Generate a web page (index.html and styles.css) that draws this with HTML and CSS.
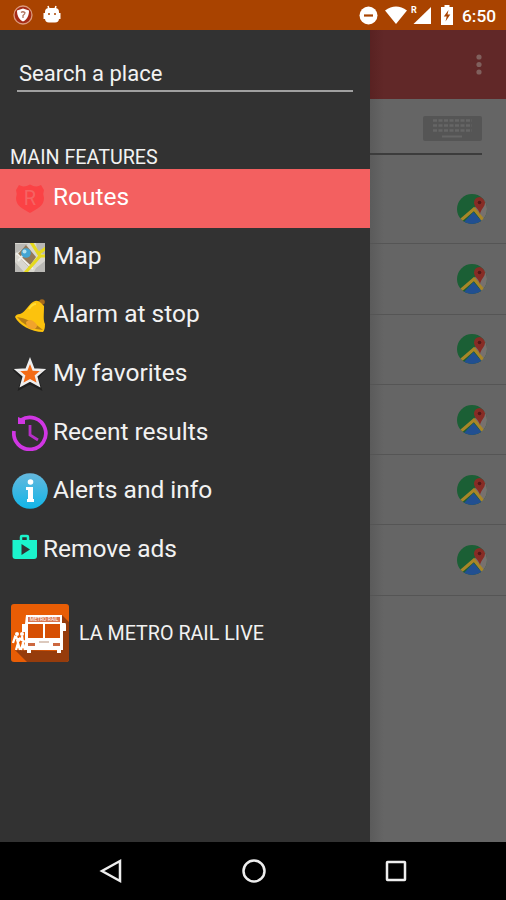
FILE: index.html
```
<!DOCTYPE html>
<html lang="en">

<head>
    <meta charset="utf-8">
    <title>LA Metro Rail Live</title>
    <link rel="stylesheet" href="styles.css">
</head>

<body>
    <svg width="0" height="0" class="defs">
        <symbol id="gmaps" viewBox="0 0 30 30">
            <clipPath id="round"><circle cx="15" cy="15" r="15"/></clipPath>
            <g clip-path="url(#round)">
                <rect width="30" height="30" fill="#1b5f35"/>
                <path d="M17 15 22 8 30 5V30H26Z" fill="#77716f"/>
                <path d="M5 30 16.500 18 27 30Z" fill="#214f91"/>
                <path d="M3 27 17 15 27 27" fill="none" stroke="#a88627" stroke-width="3"/>
                <path d="M23 20C22 15 17 13 17 8.500A5.500 5.500 0 0 1 28 8.500C28 13 24 15 23 20Z" fill="#872c25"/>
                <circle cx="22.500" cy="8.500" r="1.800" fill="#501818"/>
            </g>
        </symbol>
    </svg>

    <div class="status-bar">
        <svg class="shield" width="20" height="20" viewBox="0 0 20 20">
            <circle cx="10" cy="10" r="9" fill="#a62b16" stroke="#dc9a7c" stroke-width="1.300"/>
            <path d="M10 3.500 16 5.500C16 11 14 14.500 10 16.500C6 14.500 4 11 4 5.500Z" fill="#fff"/>
            <path d="M8 7.500Q10 5.800 12 7.800Q12 9 10 10.500V13" fill="none" stroke="#b17762" stroke-width="1.300"/>
        </svg>
        <svg class="droid" width="18" height="19" viewBox="0 0 18 19">
            <path d="M5 1 6 4M13 1 12 4" stroke="#fff" stroke-width="1.500"/>
            <rect x="2" y="3" width="14" height="14.500" rx="4" fill="#fff"/>
            <path d="M1.500 8V14M16.500 8V14" stroke="#fff" stroke-width="2"/>
            <circle cx="6" cy="9" r="1" fill="#a94300"/>
            <circle cx="12" cy="9" r="1" fill="#a94300"/>
        </svg>
        <div class="status-right">
            <svg width="19" height="19" viewBox="0 0 19 19">
                <circle cx="9.500" cy="9.500" r="9" fill="#fff"/>
                <path d="M5 9.500H14" stroke="#a94300" stroke-width="2.200"/>
            </svg>
            <svg class="wifi" width="22" height="18" viewBox="0 0 22 18">
                <path d="M0 4.500Q11-3.500 22 4.500L11 18Z" fill="#fff"/>
            </svg>
            <svg class="signal" width="21" height="20" viewBox="0 0 21 20">
                <path d="M20 2V19H2.500Z" fill="#fff"/>
                <text x="0" y="7.500">R</text>
            </svg>
            <svg class="battery" width="12" height="20" viewBox="0 0 12 20">
                <path d="M3.500 0H8.500V2H12V20H0V2H3.500Z" fill="#fff"/>
                <path d="M7.500 5 2.800 11.500H5.700L4.500 16.500 9.300 9.500H6.500Z" fill="#a94300"/>
            </svg>
            <span class="clock">6:50</span>
        </div>
    </div>

    <div class="screen">
        <div class="drawer">
            <div class="search">Search a place</div>
            <h2>MAIN FEATURES</h2>
            <ul class="menu">
                <li class="active">
                    <svg width="36" height="36" viewBox="0 0 36 36">
                        <path d="M7 5Q12 8 18 4.500Q24 8 29 5L32 10Q30.500 14 32 18C32 26 25 29 18 33C11 29 4 26 4 18Q5.500 14 4 10Z" fill="#fb4245"/>
                        <text class="route-letter" x="18" y="25">R</text>
                    </svg>
                    <span>Routes</span>
                </li>
                <li>
                    <svg width="36" height="36" viewBox="0 0 36 36">
                        <clipPath id="tile"><rect x="3" y="4" width="30" height="29"/></clipPath>
                        <g clip-path="url(#tile)">
                            <rect x="3" y="4" width="30" height="29" fill="#d8d6cf"/>
                            <path d="M3 5H16L9 11 3 15ZM24 4H33V16L25 12ZM3 23 12 33H3ZM24 29 33 22V33H22Z" fill="#b9b8b4"/>
                            <path d="M5 16 14 6 24 18 17 28Z" fill="#92795a"/>
                            <path d="M4 14 21 30M6 22 12 15" stroke="#eeede8" stroke-width="2"/>
                            <path d="M19 3 28 17 13 34M27 17H34M26 15 34 9" fill="none" stroke="#e5d91d" stroke-width="3.200"/>
                            <circle cx="14" cy="14" r="4.800" fill="#43a5d3"/>
                            <circle cx="12.500" cy="12.500" r="2" fill="#b6e1ee"/>
                        </g>
                    </svg>
                    <span>Map</span>
                </li>
                <li>
                    <svg width="36" height="36" viewBox="0 0 36 36">
                        <circle cx="30" cy="5" r="2.800" fill="#a76a1b"/>
                        <path d="M29 6 32 9C32 18 31 23 33 27Q33 33 31 35C19 35 7 28 3 20Q4 17 8 17C14 15 17 6 23 4Q26 3 29 6Z" fill="#fcc20d"/>
                        <path d="M5 20Q17 21 31 33Q14 32 5 20Z" fill="#b97f15"/>
                        <path d="M14 25Q19 20 25 28Q25 33 19 32Q14 31 14 25Z" fill="#f1a32c"/>
                        <path d="M17 12Q20 7 24 7" fill="none" stroke="#ffdc35" stroke-width="2"/>
                    </svg>
                    <span>Alarm at stop</span>
                </li>
                <li>
                    <svg width="36" height="36" viewBox="0 0 36 36">
                        <path d="M18 6 22 15 31 15 25 22 28 32 18 27 8 32 11 22 4 15 14 15Z" fill="#171717" stroke="#202020" stroke-width="3"/>
                        <path d="M18 4.500 21.500 13.500 31 14 24 20 26.500 29 18 24.500 9.500 29 12 20 5 14 14.500 13.500Z" fill="#f36b16" stroke="#eee" stroke-width="2.500"/>
                    </svg>
                    <span>My favorites</span>
                </li>
                <li>
                    <svg width="36" height="36" viewBox="0 0 36 36">
                        <path d="M2 16A16 16 0 1 0 9 5" fill="none" stroke="#d136e4" stroke-width="3.700"/>
                        <path d="M6 2V9H13V5Z" fill="#d136e4"/>
                        <path d="M18 10V20L26 25" fill="none" stroke="#b52fc6" stroke-width="2.800"/>
                    </svg>
                    <span>Recent results</span>
                </li>
                <li>
                    <svg width="36" height="36" viewBox="0 0 36 36">
                        <linearGradient id="blue" x2="0" y2="1">
                            <stop stop-color="#65b8dd"/>
                            <stop offset="1" stop-color="#12b6e8"/>
                        </linearGradient>
                        <circle cx="18" cy="18" r="17.800" fill="url(#blue)"/>
                        <circle cx="18.500" cy="9" r="2.800" fill="#fff"/>
                        <path d="M14 14H21V26H22V29H15V26H16V17H14Z" fill="#fff"/>
                    </svg>
                    <span>Alerts and info</span>
                </li>
                <li class="ads">
                    <svg width="26" height="26" viewBox="0 0 26 26">
                        <path d="M9 6V3Q9 2 10 2H15Q16 2 16 3V6" fill="none" stroke="#1bf4cc" stroke-width="2.500"/>
                        <path d="M.5 6H25V22Q25 25 22 25H3.500Q.5 25 .5 22Z" fill="#1bf4cc"/>
                        <path d="M9.500 10V21L18 15.500Z" fill="#303535"/>
                    </svg>
                    <span>Remove ads</span>
                </li>
            </ul>
            <div class="app-info">
                <svg width="58" height="58" viewBox="0 0 58 58">
                    <rect width="58" height="58" rx="3" fill="#e85d05"/>
                    <path d="M51 11 58 18V55Q58 58 55 58H16L4 46 50 47Z" fill="#963c0c"/>
                    <path d="M15 11H51V19H54Q55 19 55 21V27H52V46H50V49H46V46H20V49H16V46H14V28H11V20H14Z" fill="#fff"/>
                    <path d="M17 20H32V34H17ZM34 20H49V34H34Z" fill="#d64f04"/>
                    <path d="M17 13H49V18H17Z" fill="#da7651"/>
                    <text class="bus-sign" x="33" y="17.300">METRO RAIL</text>
                    <path d="M17 39H24V42H17ZM42 39H49V42H42Z" fill="#cc6840"/>
                    <path d="M28 37H38V39H28Z" fill="#dcc9bd"/>
                    <circle cx="6" cy="30" r="2" fill="#fff"/>
                    <circle cx="11" cy="30" r="2" fill="#fff"/>
                    <path d="M5 32 7 39 5 46M2 39 4 33 9 37M7 39 9 46M11 32 12 39 10 46M8 34 14 38M12 39 14 46" fill="none" stroke="#fff" stroke-width="2.300"/>
                </svg>
                <span>LA METRO RAIL LIVE</span>
            </div>
        </div>

        <div class="content">
            <div class="toolbar">
                <svg width="6" height="22" viewBox="0 0 6 22" fill="#80605d">
                    <circle cx="3" cy="3" r="2.600"/>
                    <circle cx="3" cy="10.500" r="2.600"/>
                    <circle cx="3" cy="18" r="2.600"/>
                </svg>
            </div>
            <div class="input-row">
                <svg width="59" height="25" viewBox="0 0 59 25">
                    <rect width="59" height="25" rx="2" fill="#555"/>
                    <path d="M10 4.500H49M10 9.500H49M10 14.500H49" stroke="#666" stroke-width="2.500" stroke-dasharray="4 1.500"/>
                    <path d="M19 20.500H39" stroke="#666" stroke-width="2"/>
                </svg>
            </div>
            <div class="places">
                <div class="place"><svg width="30" height="30"><use href="#gmaps"/></svg></div>
                <div class="place"><svg width="30" height="30"><use href="#gmaps"/></svg></div>
                <div class="place"><svg width="30" height="30"><use href="#gmaps"/></svg></div>
                <div class="place"><svg width="30" height="30"><use href="#gmaps"/></svg></div>
                <div class="place"><svg width="30" height="30"><use href="#gmaps"/></svg></div>
                <div class="place"><svg width="30" height="30"><use href="#gmaps"/></svg></div>
            </div>
        </div>
    </div>

    <div class="nav-bar">
        <svg width="24" height="26" viewBox="0 0 24 26"><path d="M21 3V23L3 13Z"/></svg>
        <svg width="26" height="26" viewBox="0 0 26 26"><circle cx="13" cy="13" r="10.500"/></svg>
        <svg width="24" height="24" viewBox="0 0 24 24"><rect x="3" y="3" width="18" height="18" rx=".5"/></svg>
    </div>
</body>

</html>
```

FILE: styles.css
```
* {
    box-sizing: border-box;
}

body {
    margin: 0;
    width: 506px;
    height: 900px;
    overflow: hidden;
    display: flex;
    flex-direction: column;
    font-family: Roboto, sans-serif;
    color: #f2f2f2;
    background-color: #000;
}

svg {
    display: block;
    flex-shrink: 0;
}

.defs {
    position: absolute;
}

.status-bar {
    height: 30px;
    flex-shrink: 0;
    display: flex;
    align-items: center;
    padding: 0 10px 0 13px;
    background-color: #a94300;
}

.droid {
    margin-left: 10px;
    margin-bottom: 2px;
}

.status-right {
    display: flex;
    align-items: center;
    margin-left: auto;
}

.wifi {
    margin-left: 7px;
}

.signal {
    margin-left: 4px;
}

.signal text {
    font-size: 9px;
    font-weight: bold;
    fill: #fff;
}

.battery {
    margin-left: 9px;
}

.clock {
    width: 34px;
    margin-left: 9px;
    font-size: 17.300px;
    font-weight: 500;
    line-height: 30px;
    padding-top: 1px;
    color: #fff;
    white-space: nowrap;
}

.screen {
    height: 812px;
    flex-shrink: 0;
    display: flex;
}

.drawer {
    width: 370px;
    flex-shrink: 0;
    background-color: #323232;
}

.search {
    height: 34px;
    margin: 28px 17px 0 17px;
    padding-left: 2px;
    border-bottom: 2px solid #a0a0a0;
    font-size: 22px;
    line-height: 31px;
}

h2 {
    height: 23px;
    margin: 54px 0 0;
    padding-left: 10px;
    font-size: 19.700px;
    font-weight: normal;
    line-height: 23px;
}

.menu {
    margin: 0;
    padding: 0;
    list-style: none;
}

.menu li {
    height: 58.700px;
    display: flex;
    padding: 11px 0 0 12px;
    font-size: 24.500px;
    line-height: 34px;
    white-space: nowrap;
}

.menu .active {
    background-color: #f36060;
    color: #fff;
}

.menu span {
    margin-left: 5px;
}

.menu .ads svg {
    margin-top: 2px;
}

.route-letter {
    font-size: 20px;
    text-anchor: middle;
    fill: #f56463;
}

.app-info {
    display: flex;
    align-items: center;
    margin-top: 24px;
    padding-left: 11px;
    font-size: 19.700px;
}

.app-info span {
    margin-left: 10px;
    padding-top: 2px;
}

.bus-sign {
    font-size: 5px;
    text-anchor: middle;
    fill: #fff;
}

.content {
    flex-grow: 1;
    background: linear-gradient(to right, #5b5b5b, #656565 14px);
}

.toolbar {
    height: 69px;
    display: flex;
    justify-content: flex-end;
    padding: 24px 24px 0 0;
    background: linear-gradient(to right, #592222, #612828 14px);
}

.input-row {
    height: 56px;
    display: flex;
    justify-content: flex-end;
    margin-right: 24px;
    padding-top: 17px;
    border-bottom: 2px solid #3c3c3c;
}

.places {
    padding-top: 19px;
}

.place {
    height: 70.300px;
    display: flex;
    justify-content: flex-end;
    align-items: center;
    padding-right: 19px;
    border-bottom: 1px solid #555;
}

.nav-bar {
    height: 58px;
    flex-shrink: 0;
    display: flex;
    align-items: center;
    justify-content: space-between;
    padding: 0 98px 0 99px;
    background-color: #000;
}

.nav-bar svg {
    fill: none;
    stroke: #eee;
    stroke-width: 2.500;
}
```
